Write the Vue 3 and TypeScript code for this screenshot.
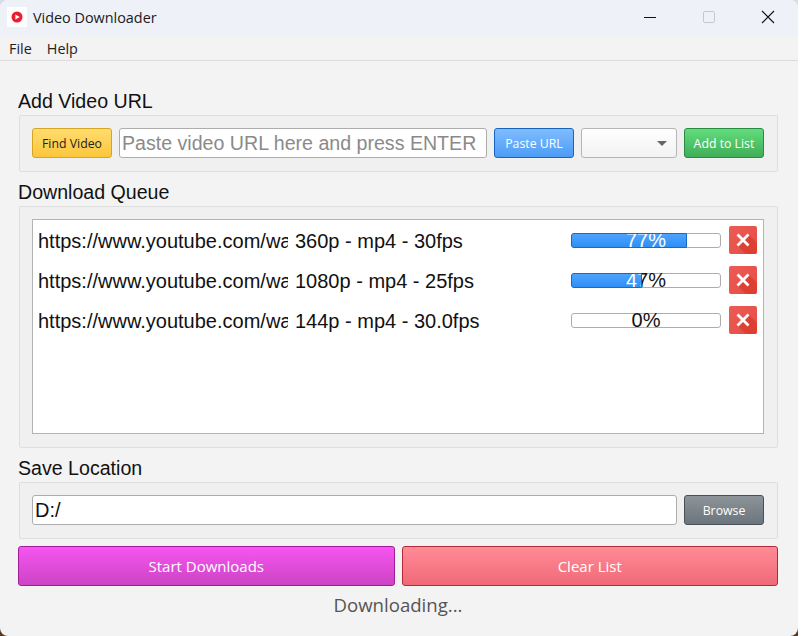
<script setup lang="ts">
interface Row { url: string; fmt: string; pct: number }
const rows: Row[] = [
  { url: 'https://www.youtube.com/wa', fmt: '360p - mp4 - 30fps', pct: 77 },
  { url: 'https://www.youtube.com/wa', fmt: '1080p - mp4 - 25fps', pct: 47 },
  { url: 'https://www.youtube.com/wa', fmt: '144p - mp4 - 30.0fps', pct: 0 },
]
</script>

<template>
  <div class="desk">
    <div class="win">
      <header class="titlebar">
        <span class="logo">
          <svg width="12" height="12" viewBox="0 0 12 12"><circle cx="6" cy="6" r="5.5" fill="#ee1c2e"/><path d="M4.4 3.4v5.2L8.8 6z" fill="#fff"/></svg>
        </span>
        <span class="title">Video Downloader</span>
        <span class="controls">
          <svg width="14" height="14" viewBox="0 0 14 14"><path d="M1 7.5h12" stroke="#111" stroke-width="1"/></svg>
          <svg class="max" width="14" height="14" viewBox="0 0 14 14"><rect x="1.5" y="1.5" width="11" height="11" rx="1.5" fill="none" stroke="#c8c8c8"/></svg>
          <svg class="close" width="14" height="14" viewBox="0 0 14 14"><path d="M1 1l12 12M13 1L1 13" stroke="#111" stroke-width="1.1"/></svg>
        </span>
      </header>
      <nav class="menu"><span>File</span><span>Help</span></nav>
      <main class="body">
        <h2>Add Video URL</h2>
        <section class="group row-group">
          <button class="btn find">Find Video</button>
          <div class="field url"><span>Paste video URL here and press ENTER</span></div>
          <button class="btn paste">Paste URL</button>
          <div class="combo"><i></i></div>
          <button class="btn add">Add to List</button>
        </section>
        <h2>Download Queue</h2>
        <section class="group queue">
          <div class="list">
            <div v-for="r in rows" :key="r.fmt" class="item">
              <span class="u">{{ r.url }}</span>
              <span class="f">{{ r.fmt }}</span>
              <div class="bar">
                <span class="lbl">{{ r.pct }}%</span>
                <div v-if="r.pct > 0" class="chunk" :style="{ width: r.pct * 1.5 + 'px' }">
                  <span class="lbl white">{{ r.pct }}%</span>
                </div>
              </div>
              <button class="del">
                <svg width="28" height="28" viewBox="0 0 28 28">
                  <path d="M20 9l8 8v9a2 2 0 0 1-2 2h-9l-8-8z" fill="#d93a2c" opacity=".75"/>
                  <path d="M8.5 8.5l11 11M19.5 8.5l-11 11" stroke="#fff" stroke-width="2.8"/>
                </svg>
              </button>
            </div>
          </div>
        </section>
        <h2>Save Location</h2>
        <section class="group row-group">
          <div class="field path"><span>D:/</span></div>
          <button class="btn browse">Browse</button>
        </section>
        <div class="actions">
          <button class="big start">Start Downloads</button>
          <button class="big clear">Clear List</button>
        </div>
        <div class="status">Downloading...</div>
      </main>
    </div>
  </div>
</template>

<style>
html, body { margin: 0; background: #fff; }
</style>

<style scoped>
.desk { width: 798px; height: 636px; background: linear-gradient(#d6dbe8 0 50%, #5a3a1e 50%); }
.win { width: 798px; height: 636px; background: #f3f3f3; font-family: "Liberation Sans", Arial, sans-serif; color: #111; overflow: hidden; box-sizing: border-box; border-radius: 8px; }
.titlebar { height: 36px; background: #eff1f8; display: flex; align-items: center; padding: 0 0 2px 7px; box-sizing: border-box; }
.logo { width: 20px; height: 20px; background: #fff; display: flex; align-items: center; justify-content: center; }
.title { font: 14.4px "Open Sans", sans-serif; margin-left: 6px; color: #1a1a1a; }
.controls { margin-left: auto; display: flex; align-items: center; gap: 45px; padding-right: 23px; }
.menu { height: 25px; box-sizing: border-box; border-bottom: 1px solid #dcdcdc; display: flex; gap: 15px; align-items: center; padding-left: 9px; font: 14.4px "Open Sans", sans-serif; color: #222; }
.body { padding: 0 20px 0 18px; display: flex; flex-direction: column; }
h2 { margin: 0; font-weight: 400; font-size: 19.6px; line-height: 20px; height: 22px; color: #111; }
h2:first-child { margin-top: 30px; }
.group { margin-left: 1px; border: 1px solid #dedede; border-radius: 2px; background: #f0f0f0; box-sizing: border-box; padding: 12px 13px 12px 12px; }
.row-group { display: flex; gap: 7px; height: 57px; margin-top: 2px; margin-bottom: 10px; }
.btn { width: 80px; height: 30px; flex: none; padding: 0; border-radius: 3px; font: 12.3px "Open Sans", sans-serif; box-sizing: border-box; }
.find { background: linear-gradient(#ffdc6f, #fcc63a); border: 1px solid #d9a520; color: #222; }
.paste { background: linear-gradient(#80bcff, #4c9cf5); border: 1px solid #1565c0; color: #fff; }
.add { background: linear-gradient(#62dc7c, #3fae58); border: 1px solid #2b8a42; color: #fff; }
.browse { background: linear-gradient(#8c9499, #6c757d); border: 1px solid #4a5057; color: #fff; }
.field { background: #fff; border: 1px solid #adadad; border-radius: 3px; height: 30px; box-sizing: border-box; display: flex; align-items: center; padding: 1px 0 0 2px; font-size: 20px; white-space: nowrap; overflow: hidden; }
.url { width: 368px; flex: none; color: #8a8a8a; font-size: 19.6px; }
.path { width: 645px; flex: none; color: #111; }
.combo { width: 96px; height: 30px; flex: none; box-sizing: border-box; border: 1px solid #b5b5b5; border-radius: 3px; background: linear-gradient(#fff, #f2f2f2); display: flex; align-items: center; justify-content: flex-end; padding-right: 9px; }
.combo i { width: 0; height: 0; border-left: 5px solid transparent; border-right: 5px solid transparent; border-top: 5px solid #666; }
.queue { height: 242px; margin-top: 2px; margin-bottom: 10px; }
.list { height: 215px; background: #fff; border: 1px solid #b4b4b4; box-sizing: border-box; padding-top: 6px; padding-left: 5px; }
.item { display: flex; align-items: center; height: 28px; margin-bottom: 12px; font-size: 20px; }
.u { width: 250px; flex: none; overflow: hidden; white-space: nowrap; padding-top: 2px; }
.f { width: 276px; flex: none; margin-left: 7px; white-space: nowrap; padding-top: 2px; }
.bar { position: relative; width: 150px; height: 15px; flex: none; box-sizing: border-box; border: 1px solid #adadad; border-radius: 3px; background: #fff; }
.lbl { position: absolute; left: -1px; width: 150px; top: -4px; line-height: 20px; text-align: center; color: #111; font-size: 20px; }
.lbl.white { color: #fff; }
.chunk { position: absolute; left: -1px; top: -1px; height: 15px; overflow: hidden; border-radius: 3px 0 0 3px; background: linear-gradient(#4da3ff, #2f8ff5); border: 1px solid #1b6ac0; box-sizing: border-box; }
.del { width: 28px; height: 28px; margin-left: 8px; flex: none; padding: 0; border: none; border-radius: 2px; background: linear-gradient(135deg, #ec5c54, #e54c44); display: block; overflow: hidden; }
.del svg { display: block; }
.actions { display: flex; gap: 7px; margin-top: -3px; }
.big { height: 40px; flex: 1; border-radius: 3px; font: 15px "Open Sans", sans-serif; color: #fff; padding: 0; box-sizing: border-box; }
.start { background: linear-gradient(#f655f0, #cc44c4); border: 1px solid #a01c98; }
.clear { background: linear-gradient(#ff8b96, #f06a78); border: 1px solid #b02a37; }
.status { text-align: center; font: 18.6px "Open Sans", sans-serif; color: #555; margin-top: 6px; }
</style>
